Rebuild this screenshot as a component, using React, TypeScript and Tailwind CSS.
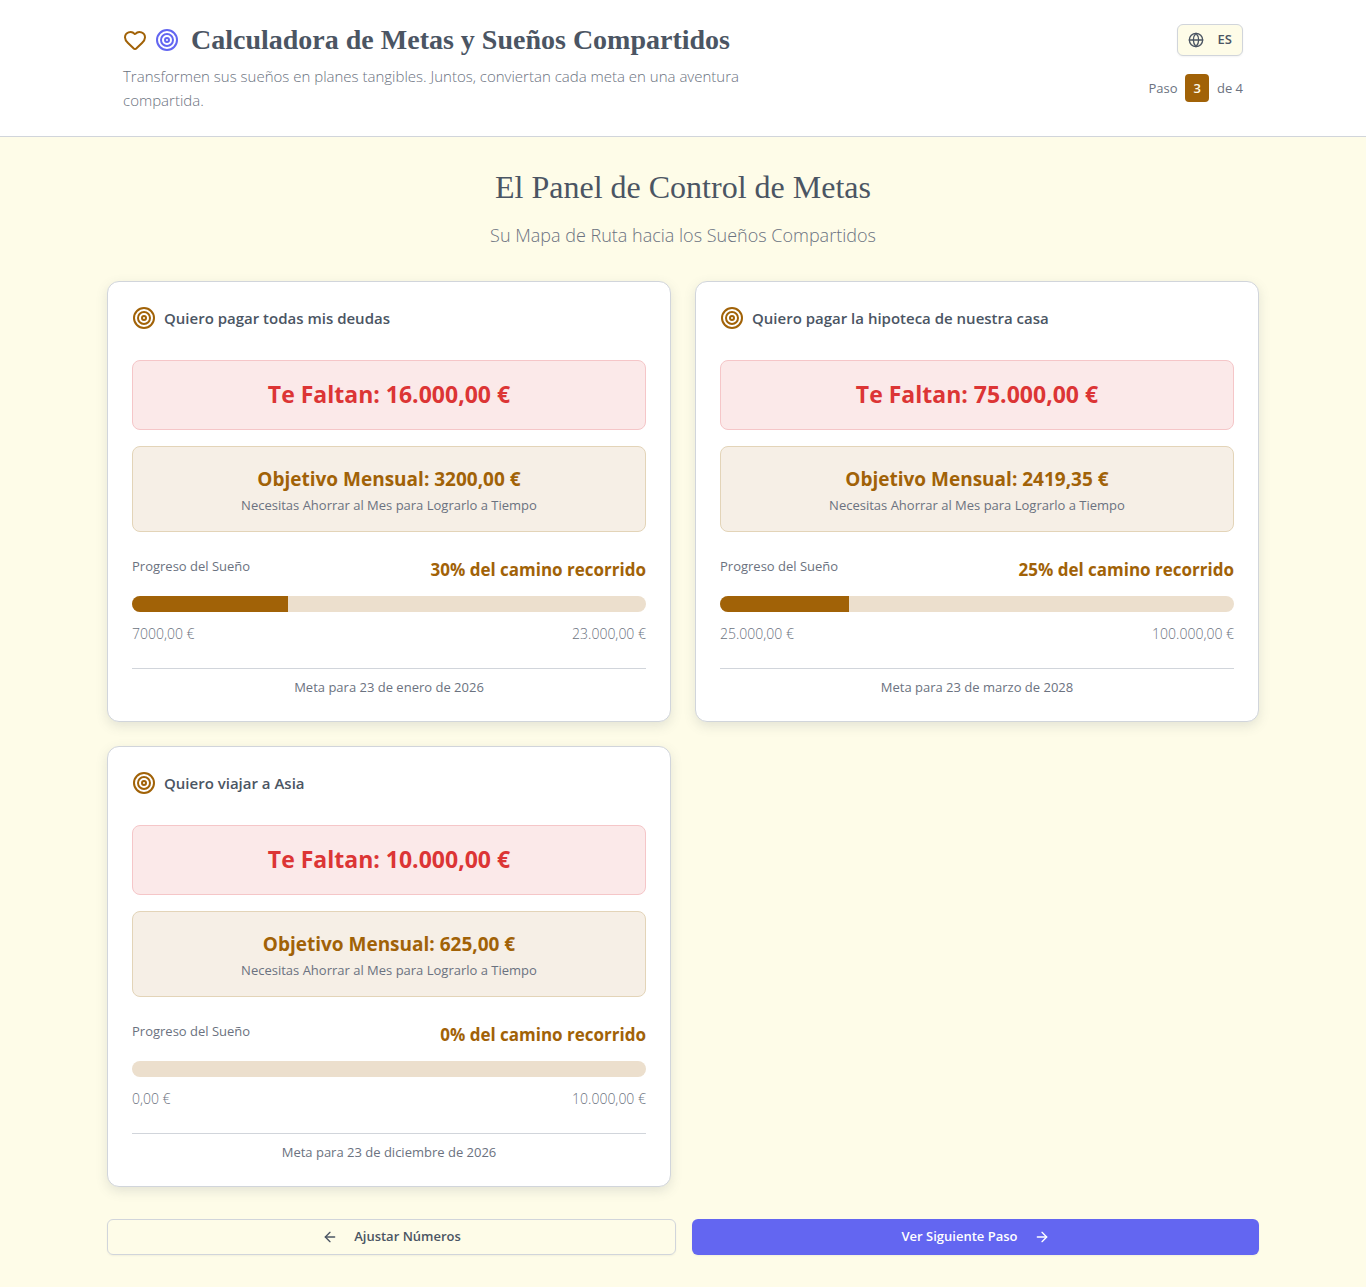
import { ArrowLeft, ArrowRight, Globe, Heart, Target } from "lucide-react";

type Goal = {
  title: string;
  missing: string;
  monthly: string;
  saved: string;
  total: string;
  ratio: number;
  date: string;
};

const goals: Goal[] = [
  {
    title: "Quiero pagar todas mis deudas",
    missing: "16.000,00 €",
    monthly: "3200,00 €",
    saved: "7000,00 €",
    total: "23.000,00 €",
    ratio: 7000 / 23000,
    date: "23 de enero de 2026",
  },
  {
    title: "Quiero pagar la hipoteca de nuestra casa",
    missing: "75.000,00 €",
    monthly: "2419,35 €",
    saved: "25.000,00 €",
    total: "100.000,00 €",
    ratio: 0.25,
    date: "23 de marzo de 2028",
  },
  {
    title: "Quiero viajar a Asia",
    missing: "10.000,00 €",
    monthly: "625,00 €",
    saved: "0,00 €",
    total: "10.000,00 €",
    ratio: 0,
    date: "23 de diciembre de 2026",
  },
];

function Header() {
  return (
    <header className="bg-white border-b border-[#d1d5db]">
      <div className="max-w-6xl mx-auto px-4 py-6 flex items-start justify-between gap-4">
        <div className="max-w-2xl">
          <div className="flex items-center gap-3">
            <div className="flex items-center gap-2">
              <Heart size={24} className="text-[#a16207]" />
              <Target size={24} className="text-[#6366f1]" />
            </div>
            <h1 className="font-['Liberation_Serif',serif] text-[28px] leading-8 font-bold">
              Calculadora de Metas y Sueños Compartidos
            </h1>
          </div>
          <p className="mt-2 text-[15px] leading-6 font-light text-[#6b7280]">
            Transformen sus sueños en planes tangibles. Juntos, conviertan cada meta en una aventura compartida.
          </p>
        </div>
        <div className="flex flex-col items-end gap-[18px]">
          <button className="h-8 px-[10px] flex items-center gap-[14px] rounded-md border border-[#d1d5db] bg-[#fefce8] shadow-xs text-[13px] font-semibold">
            <Globe size={16} />
            ES
          </button>
          <div className="flex items-center gap-2 text-[13px] leading-5 text-[#6b7280]">
            <span>Paso</span>
            <span className="px-2 py-1 rounded-sm bg-[#a16207] text-[#fefce8] font-semibold">3</span>
            <span>de 4</span>
          </div>
        </div>
      </div>
    </header>
  );
}

function GoalCard({ goal }: { goal: Goal }) {
  return (
    <article className="bg-white rounded-xl border border-[#d1d5db] p-6 shadow-[0_4px_12px_rgba(75,85,99,0.15)]">
      <div className="flex items-center gap-2">
        <Target size={24} className="text-[#a16207]" />
        <h3 className="text-[15px] leading-6 font-semibold">{goal.title}</h3>
      </div>

      <div className="mt-[30px] px-4 pt-[15px] pb-[17px] rounded-lg border border-[#f5c6c8] bg-[#fbe9e9] text-center">
        <div className="text-[23px] leading-9 font-bold text-[#dc3535]">Te Faltan: {goal.missing}</div>
      </div>

      <div className="mt-4 p-4 rounded-lg border border-[#e3d4b8] bg-[#f6efe6] text-center">
        <div className="text-[19px] leading-8 font-bold text-[#a16207]">Objetivo Mensual: {goal.monthly}</div>
        <div className="text-[13px] leading-5 text-[#6b7280]">Necesitas Ahorrar al Mes para Lograrlo a Tiempo</div>
      </div>

      <div className="mt-6 flex items-start justify-between">
        <span className="text-[13px] leading-5 text-[#6b7280]">Progreso del Sueño</span>
        <span className="text-[17px] leading-7 font-bold text-[#a16207]">
          {Math.round(goal.ratio * 100)}% del camino recorrido
        </span>
      </div>
      <div className="mt-3 h-4 rounded-full overflow-hidden bg-[#ecdfcd]">
        <div className="h-full bg-[#a16207]" style={{ width: `${goal.ratio * 100}%` }} />
      </div>
      <div className="mt-3 flex justify-between text-sm leading-5 font-light text-[#6b7280]">
        <span>{goal.saved}</span>
        <span>{goal.total}</span>
      </div>

      <div className="mt-6 pt-2 border-t border-[#d1d5db] text-center text-[13px] leading-5 text-[#6b7280]">
        Meta para {goal.date}
      </div>
    </article>
  );
}

export default function App() {
  return (
    <div className="min-h-screen bg-[#fefce8] text-[#4b5563] font-['Open_Sans','Noto_Sans',sans-serif]">
      <Header />
      <main className="max-w-6xl mx-auto py-8">
        <div className="text-center">
          <h2 className="font-['Liberation_Serif',serif] text-[32px] leading-9">El Panel de Control de Metas</h2>
          <p className="mt-4 text-lg leading-7 font-light text-[#6b7280]">Su Mapa de Ruta hacia los Sueños Compartidos</p>
        </div>

        <div className="mt-8 grid grid-cols-2 gap-6">
          {goals.map((g) => (
            <GoalCard key={g.title} goal={g} />
          ))}
        </div>

        <div className="mt-8 flex gap-4">
          <button className="flex-1 h-9 px-4 flex items-center justify-center gap-4 rounded-md border border-[#d1d5db] shadow-xs text-[13px] font-semibold">
            <ArrowLeft size={16} />
            Ajustar Números
          </button>
          <button className="flex-1 h-9 px-4 flex items-center justify-center gap-4 rounded-md bg-[#6366f1] text-white shadow-xs text-[13px] font-semibold">
            Ver Siguiente Paso
            <ArrowRight size={16} />
          </button>
        </div>
      </main>
    </div>
  );
}
